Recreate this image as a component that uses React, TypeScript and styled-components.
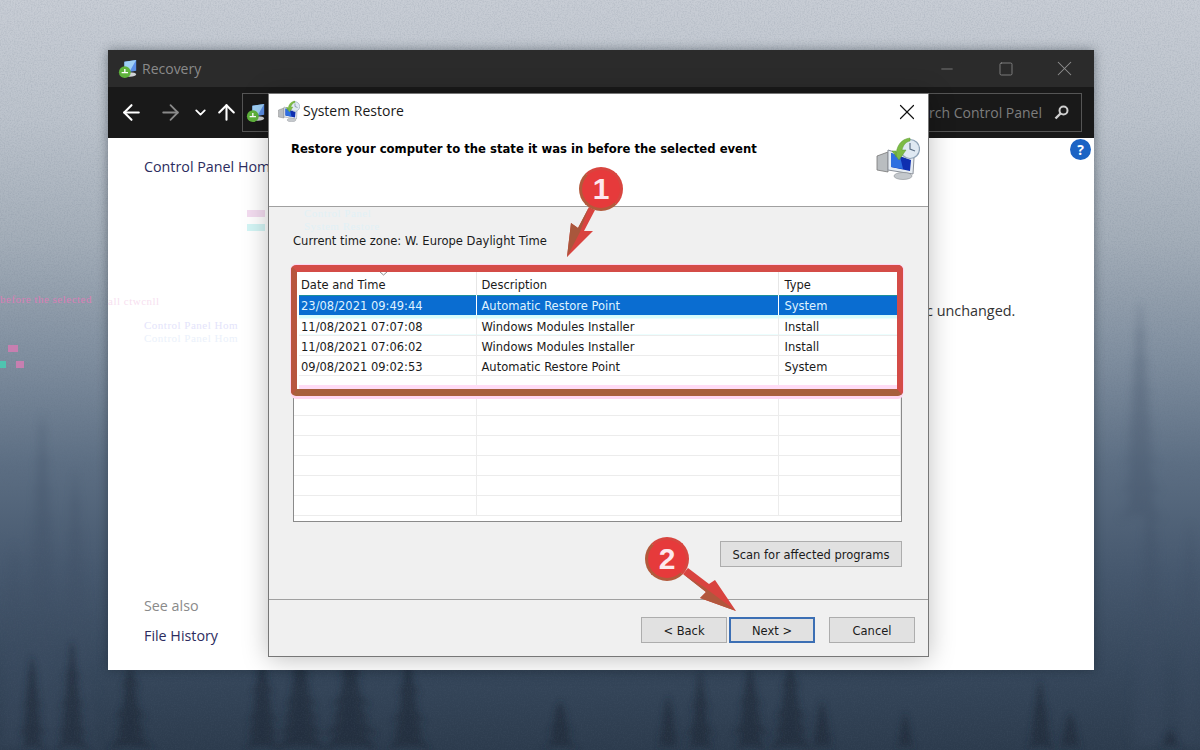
import React from "react";
import styled, { createGlobalStyle } from "styled-components";
import { ArrowLeft, ArrowRight, ArrowUp, ChevronDown, X, Minus, Square } from "lucide-react";

const GlobalStyle = createGlobalStyle`
  html, body { margin: 0; padding: 0; }
  body { font-family: "Open Sans", "Noto Sans", sans-serif; }
`;

const Desktop = styled.div`
  position: relative;
  width: 1200px;
  height: 750px;
  overflow: hidden;
  background: linear-gradient(180deg, #c8cdd5 0%, #bcc3cc 16%, #a4aeb9 32%, #7f8e9f 48%, #5c6e83 62%, #46586e 76%, #35465a 90%, #2c3b4d 100%);
`;

const Scenery = styled.svg`
  position: absolute;
  inset: 0;
`;

const RecoveryWindow = styled.section`
  position: absolute;
  left: 108px;
  top: 50px;
  width: 986px;
  height: 620px;
  display: flex;
  flex-direction: column;
  background: #fff;
  box-shadow: 0 0 10px rgba(20, 30, 40, 0.45);
`;

const TitleBar = styled.header`
  height: 37px;
  flex: none;
  display: flex;
  align-items: center;
  background: #2b2b2b;
  padding-left: 10px;
`;

const WindowTitle = styled.span`
  flex: 1;
  margin-left: 4px;
  font-size: 14px;
  color: #8a8a8a;
`;

const WindowButton = styled.span`
  width: 59px;
  display: flex;
  justify-content: center;
  color: #8f8f8f;
`;

const NavBar = styled.nav`
  height: 51px;
  flex: none;
  display: flex;
  align-items: center;
  background: #191919;
  padding: 0 12px 0 14px;
  color: #fff;
`;

const NavButton = styled.span<{ $w: number; $dim?: boolean; $ml?: number }>`
  flex: none;
  width: ${(p) => p.$w}px;
  margin-left: ${(p) => p.$ml ?? 0}px;
  display: flex;
  justify-content: center;
  color: ${(p) => (p.$dim ? "#8a8a8a" : "#fff")};

  & svg {
    flex: none;
  }
`;

const AddressBox = styled.div`
  width: 300px;
  height: 39px;
  margin-left: 2px;
  border: 1px solid #555;
  display: flex;
  align-items: center;
  padding-left: 3px;
  box-sizing: border-box;
`;

const SearchBox = styled.div`
  margin-left: auto;
  width: 300px;
  height: 39px;
  box-sizing: border-box;
  border: 1px solid #555;
  display: flex;
  align-items: center;
  justify-content: flex-end;
  gap: 12px;
  padding-right: 12px;
  font-size: 14px;
  color: #7d7d7d;
`;

const WindowBody = styled.div`
  position: relative;
  flex: 1;
  display: grid;
  grid-template-columns: 160px 1fr;
  min-height: 0;
`;

const Sidebar = styled.aside`
  display: flex;
  flex-direction: column;
  padding: 19px 0 24px 36px;
`;

const SideLink = styled.a`
  font-size: 14.3px;
  line-height: 20px;
  color: #2c2c5e;
  white-space: nowrap;
`;

const SideLabel = styled.div`
  margin-top: auto;
  margin-bottom: 10px;
  font-size: 14.3px;
  line-height: 20px;
  color: #8a8a8a;
`;

const MainPane = styled.div`
  padding: 163px 0 0 658px;
  font-size: 14.4px;
  line-height: 20px;
  color: #333;
`;

const HelpBadge = styled.span`
  position: absolute;
  right: 3px;
  top: 1px;
  width: 21px;
  height: 21px;
  border-radius: 50%;
  background: #1b63c4;
  color: #fff;
  font: 700 14px/21px "Open Sans", sans-serif;
  text-align: center;
`;

const Dialog = styled.section`
  position: absolute;
  left: 268px;
  top: 93px;
  width: 661px;
  height: 564px;
  box-sizing: border-box;
  display: flex;
  flex-direction: column;
  border: 1px solid #777;
  background: #f0f0f0;
  box-shadow: 0 2px 24px rgba(0, 0, 0, 0.25);
  font-family: "DejaVu Sans", sans-serif;
  color: #1a1a1a;
`;

const DialogHeader = styled.header`
  height: 113px;
  flex: none;
  box-sizing: border-box;
  background: #fff;
  border-bottom: 1px solid #a0a0a0;
  display: grid;
  grid-template-columns: 1fr auto;
  grid-template-rows: 36px 1fr;
`;

const DialogTitle = styled.div`
  display: flex;
  align-items: center;
  gap: 3px;
  padding: 0 0 3px 9px;
  font-family: "Open Sans", sans-serif;
  font-size: 14px;
`;

const CloseButton = styled.span`
  display: flex;
  align-items: center;
  justify-content: flex-end;
  padding: 0 8px 0 0;
  color: #111;
`;

const Heading = styled.h1`
  margin: 0;
  padding: 11px 0 0 22px;
  font-size: 11.65px;
  line-height: 16px;
  font-weight: 700;
  color: #000;
`;

const HeaderArt = styled.div`
  padding: 6px 8px 0 0;
`;

const DialogMain = styled.div`
  flex: 1;
  display: flex;
  flex-direction: column;
  padding: 26px 26px 0 24px;
  min-height: 0;
`;

const ZoneLine = styled.div`
  font-size: 11.55px;
  line-height: 16px;
  margin-bottom: 19px;
`;

const ListFrame = styled.div`
  height: 254px;
  box-sizing: border-box;
  border: 1px solid #8a8a8a;
  background: #fff;
  overflow: hidden;
`;

const Table = styled.table`
  width: 100%;
  table-layout: fixed;
  border-collapse: collapse;
  font-size: 11.5px;
`;

const Th = styled.th<{ $w?: number; $pad: number }>`
  position: relative;
  width: ${(p) => (p.$w ? `${p.$w}px` : "auto")};
  height: 26px;
  box-sizing: border-box;
  padding: 6px 0 0 ${(p) => p.$pad}px;
  font-weight: 400;
  text-align: left;
  border-right: 1px solid #e6e6e6;
`;

const Td = styled.td<{ $sel?: boolean; $under?: boolean; $pad: number }>`
  height: 20px;
  box-sizing: border-box;
  padding: 3px 0 0 ${(p) => p.$pad}px;
  line-height: 16px;
  white-space: nowrap;
  border-right: 1px solid ${(p) => (p.$sel ? "#fff" : "#ececec")};
  border-bottom: 1px solid ${(p) => (p.$sel ? "#d6fbfb" : "#ececec")};
  background: ${(p) =>
    p.$sel ? "#0a6dd1" : p.$under ? "linear-gradient(#d8fdfd 3px, #fff 3px)" : "#fff"};
  box-shadow: ${(p) => (p.$sel ? "inset 0 1px #1d8f9c" : "none")};
  color: ${(p) => (p.$sel ? "#dff2ff" : "#1a1a1a")};
`;

const SortMark = styled.svg`
  position: absolute;
  left: 85px;
  top: 2px;
`;

const ScanRow = styled.div`
  display: flex;
  justify-content: flex-end;
  margin-top: 19px;
`;

const DialogFooter = styled.footer`
  height: 57px;
  flex: none;
  box-sizing: border-box;
  border-top: 1px solid #a0a0a0;
  display: flex;
  padding: 17px 13px 0 0;
  justify-content: flex-end;
`;

const Button = styled.button<{ $w: number; $focus?: boolean; $gap?: number }>`
  width: ${(p) => p.$w}px;
  height: 26px;
  box-sizing: border-box;
  margin-left: ${(p) => p.$gap ?? 0}px;
  padding: 1px 0 0;
  background: #e1e1e1;
  border: ${(p) => (p.$focus ? "2px solid #3c6fb4" : "1px solid #adadad")};
  font-family: "DejaVu Sans", sans-serif;
  font-size: 11.5px;
  color: #1a1a1a;
`;

const Callout = styled.div`
  position: absolute;
  left: 291px;
  top: 265px;
  width: 612px;
  height: 131px;
  box-sizing: border-box;
  border: 6px solid #d44c47;
  border-left-color: #b8553f;
  border-bottom-color: #a85f3c;
  border-bottom-width: 7px;
  border-top-width: 7px;
  border-radius: 5px;
  box-shadow: 0 0 0 1px #ffd6f2, 0 3px 0 #ffd6f2, inset 2px 0 #fff, inset 0 -4px #ffdcf6;
`;

const Marker = styled.div<{ $x: number; $y: number }>`
  position: absolute;
  left: ${(p) => p.$x - 22}px;
  top: ${(p) => p.$y - 22}px;
  width: 44px;
  height: 44px;
  box-sizing: border-box;
  border-radius: 50%;
  background: #e63a3b;
  border: 3px solid #b25a3c;
  border-top-color: #d8453f;
  border-right-color: #d8453f;
  color: #fde8ee;
  font: 700 30px/37px "Liberation Sans", sans-serif;
  text-align: center;
`;

const ArrowLayer = styled.svg`
  position: absolute;
  inset: 0;
  pointer-events: none;
`;

// stray capture artefacts: pale ghost text left behind by the screenshot
const Ghost = styled.span<{ $x: number; $y: number; $c: string }>`
  position: absolute;
  left: ${(p) => p.$x}px;
  top: ${(p) => p.$y}px;
  font: 400 11px/12px "Liberation Serif", serif;
  letter-spacing: 0.5px;
  color: ${(p) => p.$c};
  white-space: nowrap;
`;

const Shard = styled.i<{ $x: number; $y: number; $w: number; $c: string }>`
  position: absolute;
  left: ${(p) => p.$x}px;
  top: ${(p) => p.$y}px;
  width: ${(p) => p.$w}px;
  height: 7px;
  background: ${(p) => p.$c};
`;

const RestoreIcon = ({ size }: { size: number }) => (
  <svg width={size} height={size} viewBox="0 0 44 44">
    <path d="M1 20 L12 16 V36 L1 34 Z" fill="#b9bdc0" stroke="#777" strokeWidth="0.8" />
    <path d="M12 14 L38 22 L37 38 L12 34 Z" fill="#e6ecf2" stroke="#8a9099" strokeWidth="1" />
    <path d="M15 17 L35 24 L34 35 L15 31 Z" fill="#0f2fb0" />
    <path d="M15 17 L24 20 L27 33 L15 31 Z" fill="#2e6fe0" />
    <ellipse cx="27" cy="40" rx="9" ry="3.5" fill="#c4c8cc" stroke="#8a8f94" strokeWidth="0.6" />
    <circle cx="34" cy="13" r="9.5" fill="#dfe9f2" stroke="#8ea2b5" strokeWidth="1.2" />
    <path d="M34 7 V13 L39 15" fill="none" stroke="#5f7287" strokeWidth="1.2" />
    <path d="M20 21 C20 10 25 3 34 2 L34 5 C29 6 27 10 26 14 L30 14 L23 24 L16 15 L20 15 Z" fill="#7dbb45" stroke="#5a9a30" strokeWidth="0.5" />
  </svg>
);

const SmallRecovery = ({ size }: { size: number }) => (
  <svg width={size} height={size} viewBox="0 0 22 22">
    <path d="M7 3 L20 1 V13 L7 15 Z" fill="#5b8fe6" />
    <path d="M7 3 L20 1 L12 15 L7 15 Z" fill="#9fd0f5" />
    <ellipse cx="13" cy="17" rx="7" ry="2.5" fill="#cfd3d6" />
    <circle cx="7.5" cy="14.5" r="6.5" fill="#5fb33c" />
    <path d="M4 15 h7 M7.5 11 v4" stroke="#fff" strokeWidth="1.5" />
  </svg>
);

const SearchGlyph = () => (
  <svg width="15" height="15" viewBox="0 0 15 15" fill="none" stroke="#cfcfcf" strokeWidth="2">
    <circle cx="9.5" cy="5.5" r="4" />
    <path d="M6.5 8.5 L1.5 13.5" strokeWidth="2.4" />
  </svg>
);

// one fir: stacked jagged boughs around a vertical axis
const firPath = (x: number, top: number, h: number, w: number) => {
  const steps = Math.max(6, Math.round(h / 14));
  const left: string[] = [];
  const right: string[] = [];
  for (let i = 1; i <= steps; i++) {
    const y = top + (h * i) / steps;
    const half = (w / 2) * Math.pow(i / steps, 0.8) * (0.6 + 0.4 * Math.abs(Math.sin(i * 1.7 + x)));
    right.push(`L${(x + half).toFixed(1)} ${y.toFixed(1)} L${(x + half * 0.4).toFixed(1)} ${(y - 4).toFixed(1)}`);
    left.unshift(`L${(x - half * 0.4).toFixed(1)} ${(y - 4).toFixed(1)} L${(x - half * 0.9).toFixed(1)} ${y.toFixed(1)}`);
  }
  return `M${x} ${top} ${right.join(" ")} ${left.join(" ")} Z`;
};

const farTrees: [number, number, number, number][] = [
  [42, 410, 340, 66],
  [75, 470, 280, 60],
  [14, 540, 210, 50],
  [1140, 300, 220, 50],
  [1150, 470, 280, 60],
  [1190, 520, 230, 50],
];

const nearTrees: [number, number, number, number][] = [
  [32, 655, 95, 34], [72, 640, 110, 40], [130, 660, 90, 50], [262, 640, 110, 44], [300, 650, 100, 60],
  [350, 650, 100, 70], [408, 655, 95, 50], [560, 700, 50, 40], [668, 695, 55, 30], [700, 670, 80, 36],
  [750, 665, 85, 46], [790, 660, 90, 50], [822, 700, 50, 30], [905, 712, 38, 24], [1040, 680, 70, 34],
  [1070, 712, 38, 30], [1170, 730, 20, 30],
];

const rows = [
  ["23/08/2021 09:49:44", "Automatic Restore Point", "System"],
  ["11/08/2021 07:07:08", "Windows Modules Installer", "Install"],
  ["11/08/2021 07:06:02", "Windows Modules Installer", "Install"],
  ["09/08/2021 09:02:53", "Automatic Restore Point", "System"],
  ["", "", ""], ["", "", ""], ["", "", ""], ["", "", ""], ["", "", ""], ["", "", ""], ["", "", ""],
];

const cellPad = [7, 5, 6];

export default function App() {
  return (
    <Desktop>
      <GlobalStyle />
      <Scenery width="1200" height="750" viewBox="0 0 1200 750">
        <defs>
          <filter id="soft"><feGaussianBlur stdDeviation="4" /></filter>
          <filter id="softer"><feGaussianBlur stdDeviation="3" /></filter>
          <filter id="grain">
            <feTurbulence type="fractalNoise" baseFrequency="0.7" numOctaves="2" seed="4" />
            <feColorMatrix values="0 0 0 0 0.1  0 0 0 0 0.14  0 0 0 0 0.2  0 0 0 1.4 -0.55" />
          </filter>
        </defs>
        <g filter="url(#soft)" fill="#3d4e63" opacity="0.3">
          {farTrees.map(([x, t, h, w]) => <path key={x} d={firPath(x, t, h, w)} />)}
        </g>
        <g filter="url(#softer)" fill="#1c2735" opacity="0.6">
          {nearTrees.map(([x, t, h, w]) => <path key={x} d={firPath(x, t, h, w)} />)}
        </g>
        <rect width="1200" height="750" filter="url(#grain)" opacity="0.22" />
      </Scenery>

      <RecoveryWindow>
        <TitleBar>
          <SmallRecovery size={20} />
          <WindowTitle>Recovery</WindowTitle>
          <WindowButton><Minus size={18} strokeWidth={1} /></WindowButton>
          <WindowButton><Square size={16} strokeWidth={1.2} /></WindowButton>
          <WindowButton><X size={25} strokeWidth={1} /></WindowButton>
        </TitleBar>
        <NavBar>
          <NavButton $w={18}><ArrowLeft size={25} strokeWidth={2} /></NavButton>
          <NavButton $w={36} $ml={12} $dim><ArrowRight size={25} strokeWidth={1.7} /></NavButton>
          <NavButton $w={24}><ChevronDown size={17} strokeWidth={2.6} /></NavButton>
          <NavButton $w={28}><ArrowUp size={25} strokeWidth={2} /></NavButton>
          <AddressBox><SmallRecovery size={20} /></AddressBox>
          <SearchBox>
            Search Control Panel
            <SearchGlyph />
          </SearchBox>
        </NavBar>
        <WindowBody>
          <Sidebar>
            <SideLink>Control Panel Home</SideLink>
            <SideLabel>See also</SideLabel>
            <SideLink>File History</SideLink>
          </Sidebar>
          <MainPane>c unchanged.</MainPane>
          <HelpBadge>?</HelpBadge>
        </WindowBody>
      </RecoveryWindow>

      <Ghost $x={0} $y={293} $c="#d87fb6">before the selected</Ghost>
      <Ghost $x={108} $y={295} $c="#f7dff0">all ctwcnll</Ghost>
      <Ghost $x={144} $y={319} $c="#e4e4fb">Control Panel Hom</Ghost>
      <Ghost $x={144} $y={332} $c="#ebf1fb">Control Panel Hom</Ghost>
      <Shard $x={247} $y={210} $w={18} $c="#f3dcf0" />
      <Shard $x={247} $y={224} $w={18} $c="#d3f5f5" />
      <Shard $x={8} $y={345} $w={10} $c="#c77fb0" />
      <Shard $x={0} $y={361} $w={6} $c="#4fc4b0" />
      <Shard $x={16} $y={361} $w={8} $c="#c77fb0" />

      <Dialog>
        <DialogHeader>
          <DialogTitle>
            <RestoreIcon size={22} />
            System Restore
          </DialogTitle>
          <CloseButton><X size={26} strokeWidth={1.1} /></CloseButton>
          <Heading>Restore your computer to the state it was in before the selected event</Heading>
          <HeaderArt><RestoreIcon size={44} /></HeaderArt>
        </DialogHeader>
        <DialogMain>
          <ZoneLine>Current time zone: W. Europe Daylight Time</ZoneLine>
          <ListFrame>
            <Table>
              <thead>
                <tr>
                  <Th $w={182} $pad={cellPad[0]}>
                    Date and Time
                    <SortMark width="9" height="5" viewBox="0 0 9 5" fill="none" stroke="#8a8a8a">
                      <path d="M0.5 0.5 L4.5 4 L8.5 0.5" />
                    </SortMark>
                  </Th>
                  <Th $w={302} $pad={cellPad[1]}>Description</Th>
                  <Th $pad={cellPad[2]}>Type</Th>
                </tr>
              </thead>
              <tbody>
                {rows.map((r, i) => (
                  <tr key={i}>
                    {r.map((c, j) => (
                      <Td key={j} $sel={i === 0} $under={i === 1} $pad={cellPad[j]}>{c}</Td>
                    ))}
                  </tr>
                ))}
              </tbody>
            </Table>
          </ListFrame>
          <ScanRow>
            <Button $w={182}>Scan for affected programs</Button>
          </ScanRow>
        </DialogMain>
        <DialogFooter>
          <Button $w={86}>&lt; Back</Button>
          <Button $w={86} $focus $gap={2}>Next &gt;</Button>
          <Button $w={86} $gap={14}>Cancel</Button>
        </DialogFooter>
      </Dialog>

      <Ghost $x={304} $y={207} $c="#e2f1f6">Control Panel</Ghost>
      <Ghost $x={304} $y={220} $c="#e2f1f6">System Restore</Ghost>

      <Callout />
      <ArrowLayer width="1200" height="750" viewBox="0 0 1200 750">
        <path d="M589 207 L578 228 L571 223 L567 257 L593 231 L584 231 L595 210 Z" fill="#d9433f" />
        <path d="M589 207 L578 228 L571 223 L567 257 L580 232 Z" fill="#a9573c" />
        <path d="M688 568 L709 584 L715 580 L736 611 L700 598 L706 592 L683 574 Z" fill="#d9433f" />
        <path d="M683 574 L706 592 L700 598 L736 611 L704 587 Z" fill="#b1573d" />
      </ArrowLayer>
      <Marker $x={601} $y={189}>1</Marker>
      <Marker $x={667} $y={559}>2</Marker>
    </Desktop>
  );
}
